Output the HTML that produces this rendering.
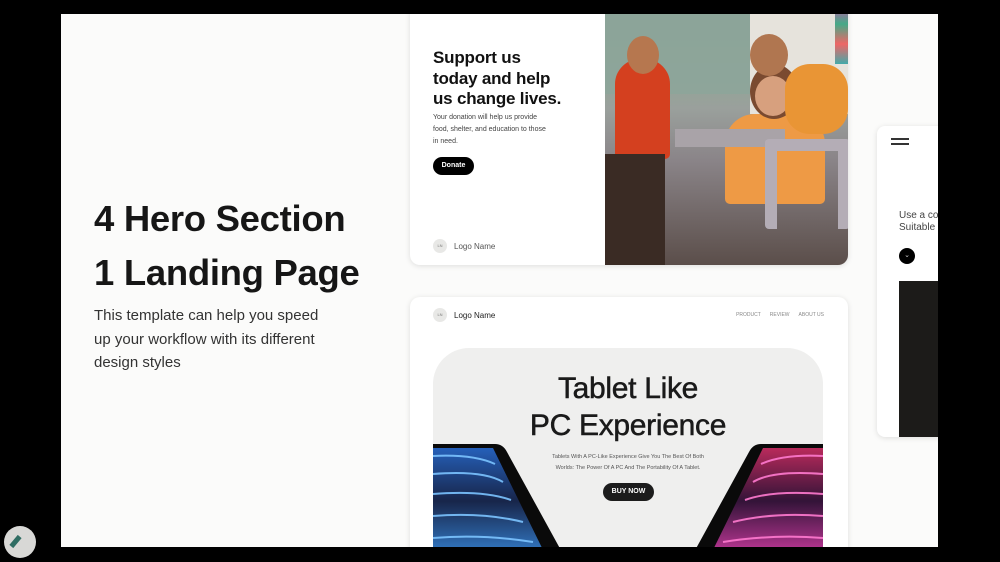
<!DOCTYPE html>
<html><head><meta charset="utf-8"><style>
*{margin:0;padding:0;box-sizing:border-box}
body{width:1000px;height:562px;background:#000;position:relative;overflow:hidden;font-family:"Liberation Sans",sans-serif}
.page{position:absolute;left:61px;top:14px;width:877px;height:533px;background:#fbfbfa;overflow:hidden}
.h1{position:absolute;left:33px;top:178px;font-size:36.5px;font-weight:700;color:#161616;line-height:54px;letter-spacing:-0.3px}
.p{position:absolute;left:33px;top:290px;font-size:15px;color:#333;line-height:23.5px;width:240px}
.card1{position:absolute;left:349px;top:-10px;width:438px;height:261px;background:#fff;border-radius:10px;box-shadow:0 1px 6px rgba(0,0,0,.12);overflow:hidden}
.photo{position:absolute;left:195px;top:0;width:243px;height:261px;background:linear-gradient(180deg,#7e9788 0,#93a597 30%,#9aa09c 40%,#8a8488 60%,#5b4e4a 100%)}
.board{position:absolute;left:0;top:0;width:145px;height:90px;background:#8da59a;opacity:.9}
.wall{position:absolute;left:145px;top:0;width:98px;height:110px;background:#e6e3dc}
.desk{position:absolute;left:70px;top:125px;width:110px;height:18px;background:#a9a3a8}
.chair{position:absolute;left:160px;top:135px;width:85px;height:90px;border:12px solid #b4adb6;border-bottom:none;border-radius:4px}
.t1{position:absolute;left:23px;top:44px;font-size:17px;font-weight:600;line-height:20.5px;color:#111;letter-spacing:-.2px}
.t2{position:absolute;left:23px;top:108px;font-size:7px;line-height:12px;color:#444;width:116px}
.don{position:absolute;left:23px;width:41px;height:18px;background:#000;color:#fff;border-radius:9px;font-size:7px;font-weight:700;text-align:center;line-height:18px}
.logo{position:absolute;display:flex;align-items:center;font-size:8px;color:#555}
.logo i{display:inline-block;width:14px;height:14px;border-radius:50%;background:#e8e8e6;font-style:normal;font-size:4px;text-align:center;line-height:14px;color:#777;margin-right:7px}
.card2{position:absolute;left:349px;top:283px;width:438px;height:270px;background:#fff;border-radius:10px;box-shadow:0 1px 6px rgba(0,0,0,.12);overflow:hidden}
.nav{position:absolute;right:24px;top:15px;font-size:5px;color:#888}
.nav span{margin-left:9px}
.hero{position:absolute;left:23px;top:51px;width:390px;height:230px;background:#efefee;border-radius:36px 36px 0 0;overflow:hidden}
.ht{position:absolute;left:0;width:390px;top:22px;text-align:center;font-size:30px;line-height:37px;font-weight:500;color:#1a1a1a;letter-spacing:-.3px;-webkit-text-stroke:.5px #1a1a1a}
.hs{position:absolute;left:0;width:390px;top:104px;text-align:center;font-size:5.5px;line-height:11px;color:#555}
.buy{position:absolute;left:170px;top:135px;width:51px;height:18px;background:#1c1c1c;border-radius:9px;color:#fff;font-size:7px;font-weight:700;text-align:center;line-height:18px}
.card3{position:absolute;left:816px;top:112px;width:80px;height:311px;background:#fff;border-radius:8px;box-shadow:0 1px 6px rgba(0,0,0,.12);overflow:hidden}
</style></head><body>
<div class="page">
<div class="h1">4 Hero Section<br>1 Landing Page</div>
<div class="p">This template can help you speed up your workflow with its different design styles</div>

<div class="card1">
<div class="t1">Support us<br>today and help<br>us change lives.</div>
<div class="t2">Your donation will help us provide food, shelter, and education to those in need.</div>
<div class="don" style="top:153px">Donate</div>
<div class="logo" style="left:23px;top:235px"><i>LN</i>Logo Name</div>
<div class="photo"><div class="board"></div><div class="wall"></div>
<div style="position:absolute;left:230px;top:0;width:13px;height:60px;background:linear-gradient(#c5a,#4a8,#e66,#4aa)"></div>
<div style="position:absolute;left:10px;top:55px;width:55px;height:100px;border-radius:25px 25px 5px 5px;background:#d4401f"></div>
<div style="position:absolute;left:22px;top:32px;width:32px;height:38px;border-radius:50%;background:#b6774f"></div>
<div style="position:absolute;left:120px;top:110px;width:100px;height:90px;border-radius:30px 30px 5px 5px;background:#ee9a45"></div>
<div style="position:absolute;left:145px;top:60px;width:48px;height:55px;border-radius:50%;background:#7a4a30"></div>
<div style="position:absolute;left:150px;top:72px;width:36px;height:40px;border-radius:50%;background:#d7a07e"></div>
<div style="position:absolute;left:145px;top:30px;width:38px;height:42px;border-radius:50%;background:#b07650"></div>
<div style="position:absolute;left:180px;top:60px;width:63px;height:70px;border-radius:25px;background:#e99535"></div>
<div class="desk"></div><div class="chair"></div>
<div style="position:absolute;left:0;top:150px;width:60px;height:111px;background:#3a2b24"></div>
</div>
</div>

<div class="card2">
<div class="logo" style="left:23px;top:11px;color:#222;font-size:8px"><i>LN</i>Logo Name</div>
<div class="nav"><span>PRODUCT</span><span>REVIEW</span><span>ABOUT US</span></div>
<div class="hero">
<div class="ht">Tablet Like<br>PC Experience</div>
<div class="hs">Tablets With A PC-Like Experience Give You The Best Of Both<br>Worlds: The Power Of A PC And The Portability Of A Tablet.</div>
<div class="buy">BUY NOW</div>
<svg style="position:absolute;left:0;top:96px" width="130" height="110"><defs><linearGradient id="b" x1="0" y1="0" x2="0" y2="1"><stop offset="0" stop-color="#2a6fd8"/><stop offset=".5" stop-color="#1a2a55"/><stop offset="1" stop-color="#3a8ee8"/></linearGradient></defs>
<path d="M0 0H62Q70 0 74 8L130 110H0Z" fill="#0a0a0a"/><path d="M0 4H60L112 110H0Z" fill="url(#b)" opacity=".85"/>
<g stroke="#7cc4ff" stroke-width="2" fill="none" opacity=".9"><path d="M0 12Q40 10 62 20"/><path d="M0 30Q50 26 70 38"/><path d="M0 50Q50 46 78 56"/><path d="M0 72Q50 68 90 78"/><path d="M0 94Q50 90 100 98"/></g></svg>
<svg style="position:absolute;left:260px;top:96px" width="130" height="110"><defs><linearGradient id="p" x1="0" y1="0" x2="0" y2="1"><stop offset="0" stop-color="#d8306a"/><stop offset=".5" stop-color="#3a1540"/><stop offset="1" stop-color="#e040b0"/></linearGradient></defs>
<path d="M130 0H68Q60 0 56 8L0 110H130Z" fill="#0a0a0a"/><path d="M130 4H70L18 110H130Z" fill="url(#p)" opacity=".85"/>
<g stroke="#ff7ad0" stroke-width="2" fill="none" opacity=".9"><path d="M130 12Q90 10 68 20"/><path d="M130 30Q80 26 60 38"/><path d="M130 50Q80 46 52 56"/><path d="M130 72Q80 68 40 78"/><path d="M130 94Q80 90 30 98"/></g></svg>
</div>
</div>

<div class="card3">
<div style="position:absolute;left:14px;top:12px;width:18px;height:1.5px;background:#333"></div>
<div style="position:absolute;left:14px;top:17px;width:18px;height:1.5px;background:#333"></div>
<div style="position:absolute;left:22px;top:84px;font-size:10px;line-height:12px;color:#444;white-space:nowrap">Use a co<br>Suitable</div>
<div style="position:absolute;left:22px;top:122px;width:16px;height:16px;border-radius:50%;background:#000;color:#ccc;font-size:7px;text-align:center;line-height:16px">⌄</div>
<div style="position:absolute;left:22px;top:155px;width:58px;height:156px;background:#1c1b19"></div>
</div>
</div>
<div style="position:absolute;left:4px;top:526px;width:32px;height:32px;border-radius:50%;background:#d8d8d6"></div>
<div style="position:absolute;left:13px;top:535px;width:5px;height:13px;background:#2f6d63;transform:rotate(40deg)"></div>
</body></html>
